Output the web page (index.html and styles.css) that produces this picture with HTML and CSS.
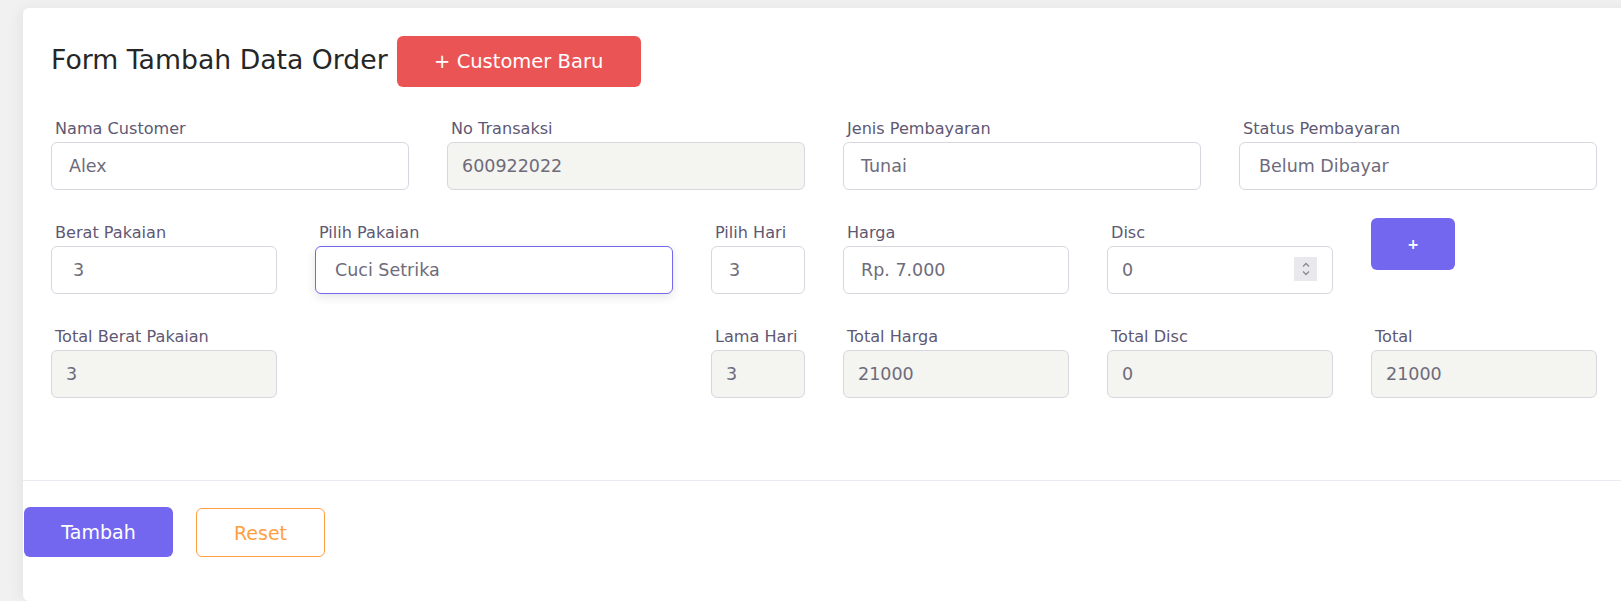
FILE: index.html
```html
<!DOCTYPE html>
<html lang="id">
<head>
<meta charset="utf-8">
<title>Form Tambah Data Order</title>
<link rel="stylesheet" href="styles.css">
</head>
<body>
<div class="card">
  <div class="card-header">
    <h4 class="title">Form Tambah Data Order</h4>
    <button class="btn btn-danger">+ Customer Baru</button>
  </div>
  <div class="card-body">
    <div class="row">
      <div class="field span3">
        <label class="label">Nama Customer</label>
        <div class="input sel">Alex</div>
      </div>
      <div class="field span3">
        <label class="label">No Transaksi</label>
        <div class="input disabled">600922022</div>
      </div>
      <div class="field span3">
        <label class="label">Jenis Pembayaran</label>
        <div class="input sel">Tunai</div>
      </div>
      <div class="field span3">
        <label class="label">Status Pembayaran</label>
        <div class="input sel2">Belum Dibayar</div>
      </div>
    </div>
    <div class="row">
      <div class="field span2">
        <label class="label">Berat Pakaian</label>
        <div class="input sel3">3</div>
      </div>
      <div class="field span3">
        <label class="label">Pilih Pakaian</label>
        <div class="input sel2 focus">Cuci Setrika</div>
      </div>
      <div class="field span1">
        <label class="label">Pilih Hari</label>
        <div class="input sel">3</div>
      </div>
      <div class="field span2">
        <label class="label">Harga</label>
        <div class="input sel">Rp. 7.000</div>
      </div>
      <div class="field span2">
        <label class="label">Disc</label>
        <div class="input number">0
          <span class="spin">
            <svg width="10" height="18" viewBox="0 0 10 18"><path d="M2 6.5 L5 3.5 L8 6.5" fill="none" stroke="#8a8893" stroke-width="1.3"/><path d="M2 11.5 L5 14.5 L8 11.5" fill="none" stroke="#8a8893" stroke-width="1.3"/></svg>
          </span>
        </div>
      </div>
      <div class="field span2">
        <button class="btn btn-primary btn-add">+</button>
      </div>
    </div>
    <div class="row">
      <div class="field span2">
        <label class="label">Total Berat Pakaian</label>
        <div class="input disabled">3</div>
      </div>
      <div class="field span1 start6">
        <label class="label">Lama Hari</label>
        <div class="input disabled">3</div>
      </div>
      <div class="field span2">
        <label class="label">Total Harga</label>
        <div class="input disabled">21000</div>
      </div>
      <div class="field span2">
        <label class="label">Total Disc</label>
        <div class="input disabled">0</div>
      </div>
      <div class="field span2">
        <label class="label">Total</label>
        <div class="input disabled">21000</div>
      </div>
    </div>
  </div>
  <div class="card-footer">
    <button class="btn btn-primary btn-submit">Tambah</button>
    <button class="btn btn-outline-warning btn-reset">Reset</button>
  </div>
</div>
</body>
</html>
```
FILE: styles.css
```css
html, body {
  margin: 0;
  padding: 0;
}
body {
  background: #f1f1f1;
  font-family: "DejaVu Sans", "Noto Sans", sans-serif;
  overflow: hidden;
  height: 601px;
}
.card {
  margin: 8px 0 0 23px;
  width: 1650px;
  height: 593px;
  background: #fff;
  border-radius: 6px;
  box-shadow: -4px 0 14px rgba(0, 0, 0, 0.05);
  box-sizing: border-box;
}
.card-header {
  display: flex;
  align-items: center;
  gap: 9px;
  padding: 28px 0 0 28px;
}
.title {
  margin: 0 0 4px 0;
  font-size: 26.7px;
  font-weight: 400;
  color: #262626;
  letter-spacing: 0;
}
.btn {
  font-family: inherit;
  border: 1px solid transparent;
  border-radius: 6px;
  cursor: pointer;
  padding: 0;
}
.btn-danger {
  width: 244px;
  height: 51px;
  background: #ea5455;
  color: #fff;
  font-size: 19.5px;
}
.card-body {
  padding: 32px 0 82px 28px;
  display: flex;
  flex-direction: column;
  gap: 33px;
  border-bottom: 1px solid #ebe9f1;
}
.row {
  display: grid;
  grid-template-columns: repeat(12, 94px);
  column-gap: 38px;
}
.span1 { grid-column: span 1; }
.span2 { grid-column: span 2; }
.span3 { grid-column: span 3; }
.start6 { grid-column: 6 / span 1; }
.field {
  display: flex;
  flex-direction: column;
  align-items: flex-start;
}
.label {
  font-size: 16.1px;
  line-height: 20px;
  color: #5e5873;
  margin: 0 0 3px 4px;
}
.input {
  position: relative;
  box-sizing: border-box;
  width: 100%;
  height: 48px;
  border: 1px solid #d8d6de;
  border-radius: 6px;
  background: #fff;
  color: #6e6b7b;
  font-size: 17.5px;
  display: flex;
  align-items: center;
  padding-left: 14px;
}
.input.sel { padding-left: 17px; }
.input.sel2 { padding-left: 19px; }
.input.sel3 { padding-left: 21px; }
.input.disabled {
  background: #f4f4f0;
}
.input.focus {
  border-color: #7367f0;
  box-shadow: 0 3px 10px 0 rgba(34, 41, 47, 0.12);
}
.spin {
  position: absolute;
  right: 15px;
  top: 10px;
  width: 23px;
  height: 24px;
  background: #e9e9ed;
  display: flex;
  align-items: center;
  justify-content: center;
}
.btn-primary {
  background: #7367f0;
  color: #fff;
}
.btn-add {
  width: 84px;
  height: 52px;
  margin-top: -5px;
  font-size: 14px;
  font-weight: 700;
  color: #fff;
}
.card-footer {
  display: flex;
  align-items: flex-start;
  gap: 23px;
  padding: 26px 0 0 1px;
}
.btn-submit {
  width: 149px;
  height: 50px;
  font-size: 19px;
}
.btn-outline-warning {
  background: #fff;
  border-color: #ff9f43;
  color: #ff9f43;
}
.btn-reset {
  width: 129px;
  height: 49px;
  margin-top: 1px;
  font-size: 19px;
}
```
